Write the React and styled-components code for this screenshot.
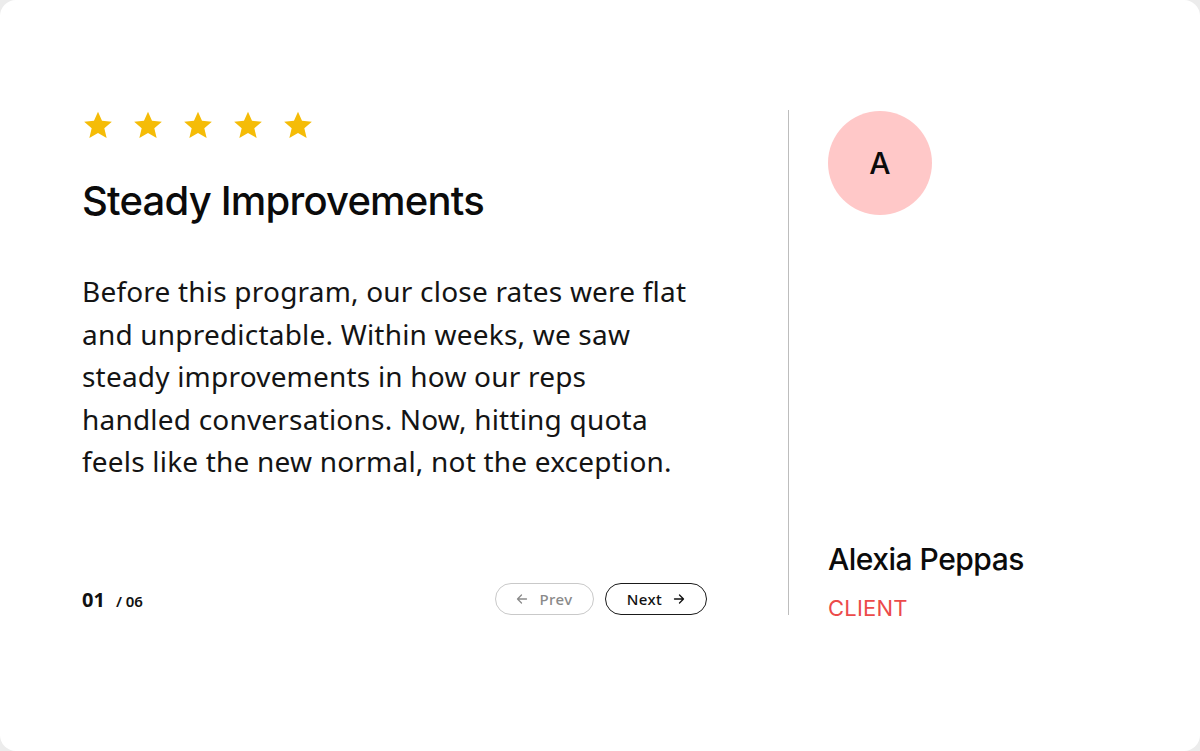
import React from "react";
import styled, { createGlobalStyle } from "styled-components";

const Global = createGlobalStyle`
  html, body { margin: 0; padding: 0; background: #ececec; }
  * { box-sizing: border-box; }
`;

const Card = styled.div`
  width: 1200px;
  height: 751px;
  background: #ffffff;
  border-radius: 16px;
  padding: 110px 0 0 82px;
  display: grid;
  grid-template-columns: 625px 81px 1px 1fr;
  grid-template-rows: 505px;
  font-family: Inter, "Liberation Sans", sans-serif;
`;

const Left = styled.div`
  display: flex;
  flex-direction: column;
`;

const Stars = styled.div`
  display: flex;
  gap: 18px;
`;

const Title = styled.h1`
  margin: 36px 0 0;
  font-size: 40px;
  font-weight: 500;
  letter-spacing: -0.8px;
  color: #0b0b0b;
  line-height: 1.2;
`;

const Body = styled.p`
  margin: 45px 0 0;
  font-family: "Noto Sans", sans-serif;
  font-size: 28px;
  letter-spacing: 0.2px;
  line-height: 42.5px;
  color: #141414;
  width: 614px;
`;

const Footer = styled.div`
  margin-top: auto;
  display: flex;
  align-items: center;
  justify-content: space-between;
  height: 32px;
`;

const Counter = styled.div`
  display: flex;
  align-items: baseline;
  gap: 11px;
  font-family: "Noto Sans", sans-serif;
  color: #111;
`;

const Current = styled.span`
  font-size: 20px;
  font-weight: 700;
`;

const Total = styled.span`
  font-size: 15px;
  font-weight: 600;
`;

const Buttons = styled.div`
  display: flex;
  gap: 11px;
`;

const NavButton = styled.button`
  height: 32px;
  padding: 0;
  border-radius: 16px;
  border: 1px solid ${(p) => (p.$dim ? "#c9c9c9" : "#1a1a1a")};
  background: #fff;
  color: ${(p) => (p.$dim ? "#8a8a8a" : "#111")};
  font-family: "Noto Sans", sans-serif;
  font-size: 15px;
  font-weight: 500;
  letter-spacing: 0.4px;
  display: flex;
  align-items: center;
  gap: 11px;
  width: ${(p) => (p.$dim ? "99px" : "102px")};
  justify-content: center;
  cursor: pointer;
`;

const Divider = styled.div`
  grid-column: 3;
  background: #bdbdbd;
  width: 1px;
`;

const Right = styled.div`
  grid-column: 4;
  padding-left: 39px;
  display: flex;
  flex-direction: column;
`;

const Avatar = styled.div`
  width: 104px;
  height: 104px;
  border-radius: 50%;
  background: #ffc8c8;
  display: flex;
  align-items: center;
  justify-content: center;
  font-size: 30px;
  font-weight: 500;
  color: #0b0b0b;
  margin-top: 1px;
`;

const Name = styled.div`
  margin-top: auto;
  font-size: 30px;
  font-weight: 500;
  letter-spacing: -0.5px;
  color: #0b0b0b;
  line-height: 1.2;
`;

const Role = styled.div`
  margin-top: 18px;
  font-size: 22px;
  color: #ec4a4a;
  letter-spacing: 0.2px;
  line-height: 1.2;
  margin-bottom: -6px;
`;

const Star = () => (
  <svg width="32" height="31" viewBox="0 0 24 24">
    <path
      fill="#F5BC07"
      d="M12 1.4l3.1 7 7.6.7-5.8 5 1.8 7.5L12 17.8l-6.7 3.8 1.8-7.5-5.8-5 7.6-.7z"
    />
  </svg>
);

const Arrow = ({ left }) => (
  <svg width="12" height="12" viewBox="0 0 12 12" fill="none" stroke="currentColor" strokeWidth="1.3" strokeLinecap="round" strokeLinejoin="round">
    {left ? <path d="M10.5 6H1.5M5.5 2L1.5 6l4 4" /> : <path d="M1.5 6h9M6.5 2l4 4-4 4" />}
  </svg>
);

export default function App() {
  return (
    <>
      <Global />
      <Card>
        <Left>
          <Stars>
            {[0, 1, 2, 3, 4].map((i) => (
              <Star key={i} />
            ))}
          </Stars>
          <Title>Steady Improvements</Title>
          <Body>
            Before this program, our close rates were flat and unpredictable. Within weeks, we saw steady
            improvements in how our reps handled conversations. Now, hitting quota feels like the new normal, not
            the exception.
          </Body>
          <Footer>
            <Counter>
              <Current>01</Current>
              <Total>/ 06</Total>
            </Counter>
            <Buttons>
              <NavButton $dim>
                <Arrow left />
                Prev
              </NavButton>
              <NavButton>
                Next
                <Arrow />
              </NavButton>
            </Buttons>
          </Footer>
        </Left>
        <Divider />
        <Right>
          <Avatar>A</Avatar>
          <Name>Alexia Peppas</Name>
          <Role>CLIENT</Role>
        </Right>
      </Card>
    </>
  );
}
